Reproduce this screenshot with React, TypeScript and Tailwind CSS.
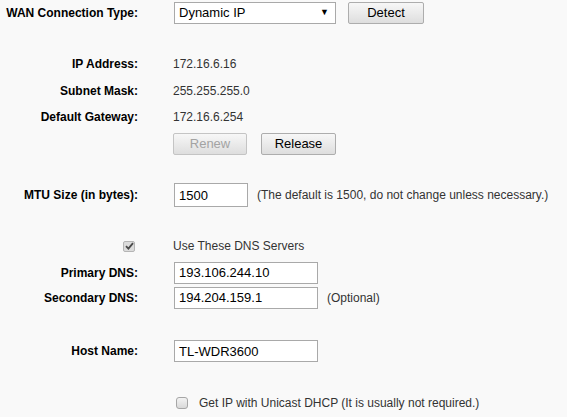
import React from "react";

const font = { fontFamily: '"Liberation Sans", Arial, sans-serif' };

function Label({ children }: { children?: React.ReactNode }) {
  return (
    <div className="w-[138px] shrink-0 text-right text-[12px] font-bold text-black leading-none">
      {children}
    </div>
  );
}

function Btn({ children, disabled, w }: { children: React.ReactNode; disabled?: boolean; w: string }) {
  return (
    <div
      className={`${w} h-[22px] flex items-center justify-center rounded-[2px] border border-[#adadad] bg-linear-to-b from-[#f7f7f7] to-[#dedede] text-[13px] leading-none ${
        disabled ? "text-[#a3a3a3] border-[#c4c4c4]" : "text-black"
      }`}
    >
      {children}
    </div>
  );
}

function Field({ value, w, h = "h-[22px]" }: { value: string; w: string; h?: string }) {
  return (
    <div className={`${w} ${h} ml-[36px] flex items-center border border-[#a9a9a9] bg-white pl-[4px] text-[13px] text-black leading-none`}>
      {value}
    </div>
  );
}

export default function App() {
  return (
    <div className="w-[567px] h-[417px] bg-[#f9f9f9] overflow-hidden" style={font}>
      {/* WAN Connection Type */}
      <div className="h-[25px] flex items-center">
        <Label>WAN Connection Type:</Label>
        <div className="ml-[36px] w-[162px] h-[22px] flex items-center justify-between border border-[#a9a9a9] bg-white pl-[4px] pr-[6px] text-[13px] text-black leading-none">
          <span>Dynamic IP</span>
          <span className="text-[9px]">▼</span>
        </div>
        <div className="ml-[12px]">
          <Btn w="w-[76px]">Detect</Btn>
        </div>
      </div>

      {/* IP info */}
      <div className="mt-[26px] h-[26px] flex items-center">
        <Label>IP Address:</Label>
        <div className="ml-[35px] text-[12px] text-[#333] leading-none">172.16.6.16</div>
      </div>
      <div className="h-[27px] flex items-center">
        <Label>Subnet Mask:</Label>
        <div className="ml-[35px] text-[12px] text-[#333] leading-none">255.255.255.0</div>
      </div>
      <div className="h-[26px] flex items-center">
        <Label>Default Gateway:</Label>
        <div className="ml-[35px] text-[12px] text-[#333] leading-none">172.16.6.254</div>
      </div>
      <div className="mt-[2px] h-[23px] flex items-center">
        <Label />
        <div className="ml-[35px] flex items-center gap-[14px]">
          <Btn w="w-[74px]" disabled>
            Renew
          </Btn>
          <Btn w="w-[75px]">Release</Btn>
        </div>
      </div>

      {/* MTU */}
      <div className="mt-[28px] h-[24px] flex items-center">
        <Label>MTU Size (in bytes):</Label>
        <Field value="1500" w="w-[74px]" h="h-[24px]" />
        <div className="ml-[9px] text-[12px] text-[#333] leading-none">
          (The default is 1500, do not change unless necessary.)
        </div>
      </div>

      {/* DNS */}
      <div className="mt-[28px] h-[22px] flex items-center">
        <div className="w-[138px] shrink-0 flex justify-end pr-[3px]">
          <div className="w-[12px] h-[11px] flex items-center justify-center rounded-[2px] border border-[#b5b5b5] bg-[#dcdcdc]">
            <svg width="9" height="8" viewBox="0 0 9 8">
              <path d="M1 4.2 L3.4 6.6 L8 1.2" fill="none" stroke="#4a4a4a" strokeWidth="1.8" />
            </svg>
          </div>
        </div>
        <div className="ml-[35px] text-[12px] text-[#333] leading-none">Use These DNS Servers</div>
      </div>
      <div className="mt-[4px] h-[23px] flex items-center">
        <Label>Primary DNS:</Label>
        <Field value="193.106.244.10" w="w-[144px]" />
      </div>
      <div className="mt-[2px] h-[23px] flex items-center">
        <Label>Secondary DNS:</Label>
        <Field value="194.204.159.1" w="w-[144px]" />
        <div className="ml-[9px] text-[12px] text-[#333] leading-none">(Optional)</div>
      </div>

      {/* Host */}
      <div className="mt-[30px] h-[24px] flex items-center">
        <Label>Host Name:</Label>
        <Field value="TL-WDR3600" w="w-[144px]" />
      </div>

      {/* Unicast */}
      <div className="mt-[28px] h-[24px] flex items-center">
        <Label />
        <div className="ml-[38px] w-[12px] h-[12px] rounded-[3px] border border-[#a6a6a6] bg-linear-to-b from-[#f3f3f3] to-[#d9d9d9]" />
        <div className="ml-[11px] text-[12px] text-[#333] leading-none">
          Get IP with Unicast DHCP (It is usually not required.)
        </div>
      </div>
    </div>
  );
}
